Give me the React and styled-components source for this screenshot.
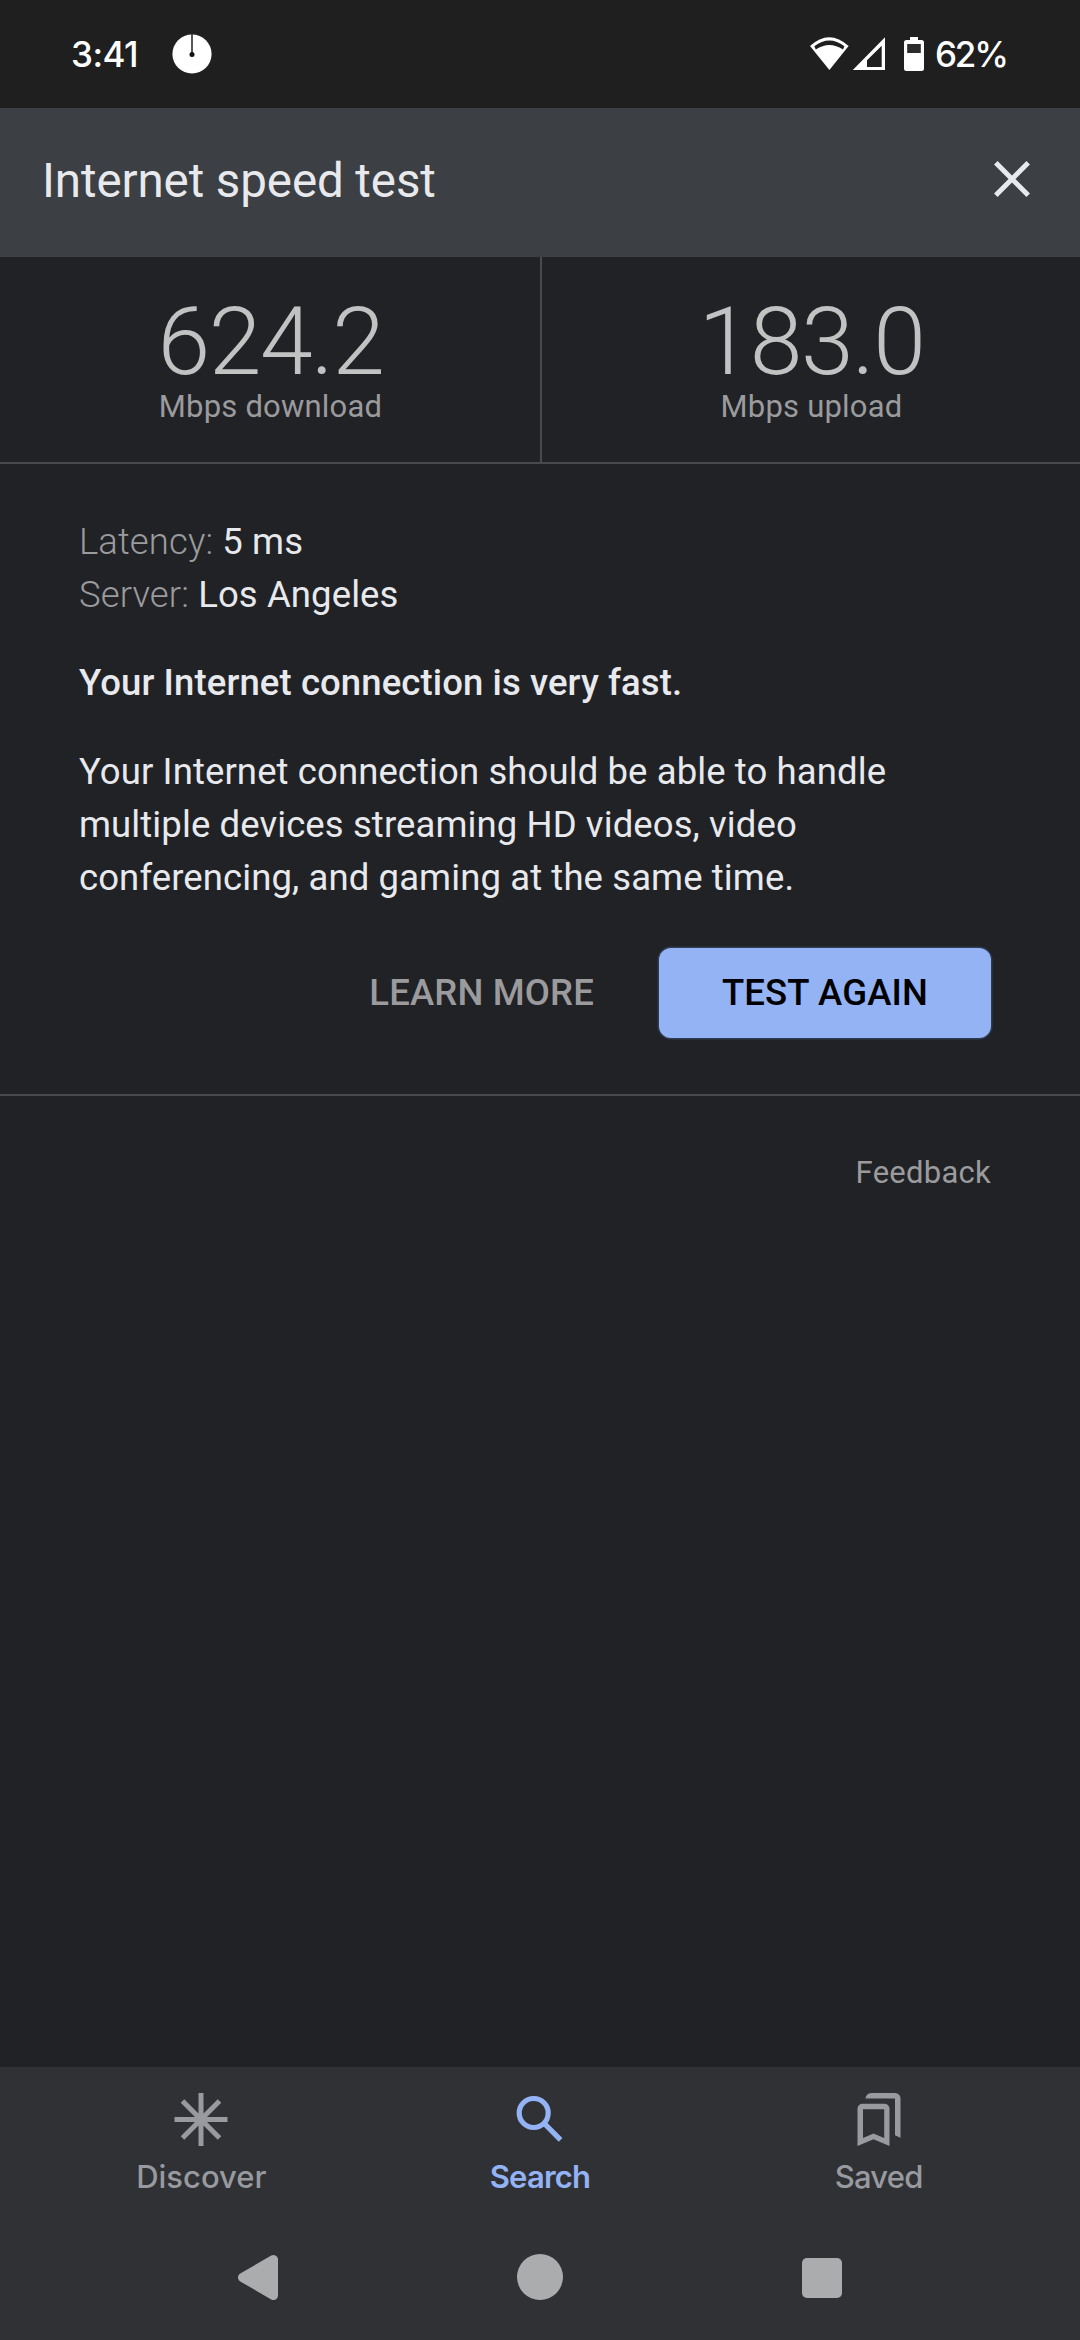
import styled, { createGlobalStyle } from "styled-components";

const COLORS = {
  statusBar: "#1f1f1f",
  header: "#3c3f43",
  page: "#212226",
  bottom: "#303135",
  divider: "#4a4a4d",
  blue: "#94b3f4",
  text: "#e8e9ed",
  muted: "#9b9b9d",
  tab: "#989a9f",
  system: "#abacae",
};

const STATS = [
  { value: "624.2", label: "Mbps download" },
  { value: "183.0", label: "Mbps upload" },
];

const TABS = [
  { label: "Discover", Icon: DiscoverIcon, spacing: "0" },
  { label: "Search", Icon: SearchIcon, active: true },
  { label: "Saved", Icon: SavedIcon },
];

function ClockIcon() {
  return (
    <svg width="40" height="40" viewBox="0 0 40 40">
      <circle cx="20" cy="20" r="19.6" fill="#fff" />
      <path d="M20 0v20" stroke="#444" strokeWidth="1.8" />
      <circle cx="20" cy="20.5" r="2.5" fill="#111" />
    </svg>
  );
}

function WifiIcon() {
  return (
    <svg width="40" height="36" viewBox="0 0 40 36">
      <path d="M1 10Q20.2 -7.4 39.6 10L20.4 34Z" fill="#fff" />
      <path
        d="M5.3 10.2Q20.4 -1 35.4 10.2L34 13.6Q20.4 4.4 6.8 13.6Z"
        fill={COLORS.statusBar}
      />
    </svg>
  );
}

function SignalIcon() {
  return (
    <svg width="34" height="36" viewBox="0 0 34 36">
      <path
        d="M0.8 34L33 1.3V34ZM15 24.3V31H29.7V9.8Z"
        fill="#fff"
        fillRule="evenodd"
      />
    </svg>
  );
}

function BatteryIcon() {
  return (
    <svg width="22" height="36" viewBox="0 0 22 36">
      <path
        d="M7 1h8v3h3.5a2.5 2.5 0 0 1 2.5 2.5v26a2.5 2.5 0 0 1-2.5 2.5h-15a2.5 2.5 0 0 1-2.5-2.5v-26a2.5 2.5 0 0 1 2.5-2.5H7z"
        fill="#fff"
      />
      <rect x="4.2" y="8" width="13.6" height="9" fill="#2c2c2c" />
    </svg>
  );
}

function CloseIcon() {
  return (
    <svg width="62" height="62" viewBox="0 0 62 62">
      <path
        d="M14.8 14.8L47.2 47.2M47.2 14.8L14.8 47.2"
        stroke={COLORS.text}
        strokeWidth="5"
      />
    </svg>
  );
}

function DiscoverIcon() {
  return (
    <svg width="64" height="64" viewBox="0 0 64 64">
      <path
        d="M32 5v53M5.5 31.5h53M13.5 13L50.5 50M50.5 13L13.5 50"
        stroke="currentColor"
        strokeWidth="5"
      />
    </svg>
  );
}

function SearchIcon() {
  return (
    <svg width="64" height="64" viewBox="0 0 64 64">
      <circle
        cx="25.7"
        cy="25"
        r="14.5"
        fill="none"
        stroke="currentColor"
        strokeWidth="5.2"
      />
      <path d="M35.8 35L52.6 51.8" stroke="currentColor" strokeWidth="5.3" />
    </svg>
  );
}

function SavedIcon() {
  return (
    <svg width="64" height="64" viewBox="0 0 64 64" fill="currentColor">
      <path
        fillRule="evenodd"
        d="M15.5 15.8h22a5 5 0 0 1 5 5V58L26.5 51.3L10.5 58V20.8a5 5 0 0 1 5-5zM16 21.2V50L26.5 45.5L37.2 50V21.2z"
      />
      <path d="M18.5 10.6a5.6 5.6 0 0 1 5.6-5.6h24a5.4 5.4 0 0 1 5.4 5.4V49.8L48 47.3V10.6z" />
    </svg>
  );
}

const App = () => {
  return (
    <Screen>
      <GlobalStyle />
      <StatusBar>
        <Time>3:41</Time>
        <ClockIcon />
        <StatusIcons>
          <WifiIcon />
          <SignalIcon />
          <BatteryIcon />
        </StatusIcons>
        <Battery>62%</Battery>
      </StatusBar>

      <Header>
        <Title>Internet speed test</Title>
        <CloseButton aria-label="Close">
          <CloseIcon />
        </CloseButton>
      </Header>

      <Stats>
        {STATS.map(({ value, label }) => (
          <Stat key={label}>
            <StatValue>{value}</StatValue>
            <StatLabel>{label}</StatLabel>
          </Stat>
        ))}
      </Stats>

      <Details>
        <div>
          <Line>
            <Name>Latency:</Name> 5 ms
          </Line>
          <Line>
            <Name>Server:</Name> Los Angeles
          </Line>
        </div>
        <Line $bold>Your Internet connection is very fast.</Line>
        <Line>
          Your Internet connection should be able to handle multiple devices
          streaming HD videos, video conferencing, and gaming at the same time.
        </Line>
        <Actions>
          <TextButton>LEARN MORE</TextButton>
          <MainButton>TEST AGAIN</MainButton>
        </Actions>
      </Details>

      <Feedback>Feedback</Feedback>

      <BottomBar>
        <Tabs>
          {TABS.map(({ label, Icon, active, spacing }) => (
            <Tab key={label} $active={active}>
              <Icon />
              <TabLabel $active={active} $spacing={spacing}>
                {label}
              </TabLabel>
            </Tab>
          ))}
        </Tabs>
        <SystemNav>
          <svg width="46" height="50" viewBox="0 0 46 50">
            <path
              d="M7.5 25.5L38.5 7.5V43.5Z"
              fill={COLORS.system}
              stroke={COLORS.system}
              strokeWidth="9"
              strokeLinejoin="round"
            />
          </svg>
          <HomeDot />
          <RecentsSquare />
        </SystemNav>
      </BottomBar>
    </Screen>
  );
};

const GlobalStyle = createGlobalStyle`
  * {
    box-sizing: border-box;
  }

  body {
    margin: 0;
    background: ${COLORS.page};
    font-family: Roboto, sans-serif;
  }

  svg {
    display: block;
    flex: none;
  }
`;

const Screen = styled.div`
  display: flex;
  flex-direction: column;
  width: 1080px;
  height: 2340px;
  overflow: hidden;
  color: ${COLORS.text};
  background: ${COLORS.page};
`;

const StatusBar = styled.div`
  display: flex;
  align-items: center;
  height: 108px;
  padding: 0 74px 0 71px;
  color: #fff;
  background: ${COLORS.statusBar};
  font-family: Inter, sans-serif;
  font-size: 35px;
  font-weight: 500;
`;

const Time = styled.span`
  width: 101px;
  letter-spacing: -0.5px;
`;

const StatusIcons = styled.div`
  display: flex;
  gap: 3px;
  margin-left: auto;

  svg:last-child {
    margin-left: 14px;
  }
`;

const Battery = styled.span`
  width: 71px;
  margin-left: 10px;
  white-space: nowrap;
  letter-spacing: -2.2px;
`;

const Header = styled.header`
  display: flex;
  align-items: center;
  justify-content: space-between;
  height: 149px;
  padding: 0 37px 8px 42px;
  background: ${COLORS.header};
`;

const Title = styled.h1`
  margin: 4px 0 0;
  font-size: 47.5px;
  font-weight: 400;
  line-height: 64px;
  letter-spacing: -0.1px;
`;

const CloseButton = styled.button`
  padding: 0;
  border: none;
  background: none;
`;

const Stats = styled.div`
  display: grid;
  grid-template-columns: 542px 1fr;
  height: 207px;
  border-bottom: 2px solid ${COLORS.divider};
`;

const Stat = styled.div`
  padding: 39px 0 0 1px;
  text-align: center;

  &:first-child {
    border-right: 2px solid ${COLORS.divider};
  }
`;

const StatValue = styled.div`
  color: #c1c2c2;
  font-size: 95px;
  font-weight: 300;
  line-height: 92px;
  letter-spacing: -1.5px;
`;

const StatLabel = styled.div`
  color: ${COLORS.muted};
  font-size: 31px;
  line-height: 38px;
  letter-spacing: 0.2px;
`;

const Details = styled.main`
  display: flex;
  flex-direction: column;
  gap: 36px;
  height: 632px;
  padding: 52px 89px 0 79px;
  border-bottom: 2px solid ${COLORS.divider};
`;

const Line = styled.p`
  margin: 0;
  font-size: 36.5px;
  font-weight: ${({ $bold }) => ($bold ? 500 : 400)};
  line-height: 52.7px;
  letter-spacing: 0.1px;
`;

const Name = styled.span`
  color: ${COLORS.muted};
  font-weight: 300;
`;

const Actions = styled.div`
  display: flex;
  justify-content: flex-end;
  gap: 65px;
  margin-top: 8px;
`;

const TextButton = styled.button`
  padding: 0 0 2px;
  border: none;
  color: ${COLORS.muted};
  background: none;
  font: 500 36.5px Roboto, sans-serif;
  letter-spacing: 0.15px;
`;

const MainButton = styled(TextButton)`
  width: 332px;
  height: 90px;
  border-radius: 12px;
  color: #000;
  background: ${COLORS.blue};
  box-shadow: 0 0 0 1.5px #2f3b52;
`;

const Feedback = styled.a`
  align-self: flex-end;
  margin: 57px 89px 0 0;
  color: ${COLORS.muted};
  font-size: 31px;
  line-height: 40px;
  letter-spacing: 0.25px;
`;

const BottomBar = styled.footer`
  margin-top: auto;
  height: 273px;
  background: ${COLORS.bottom};
`;

const Tabs = styled.nav`
  display: grid;
  grid-template-columns: repeat(3, 1fr);
  height: 146px;
  padding: 21px 32px 0;
`;

const Tab = styled.div`
  display: flex;
  flex-direction: column;
  align-items: center;
  gap: 5px;
  color: ${({ $active }) => ($active ? COLORS.blue : COLORS.tab)};
`;

const TabLabel = styled.span`
  font-family: Inter, sans-serif;
  font-size: 31px;
  font-weight: ${({ $active }) => ($active ? 600 : 500)};
  line-height: 40px;
  letter-spacing: ${({ $spacing }) => $spacing || "-0.8px"};
`;

const SystemNav = styled.div`
  display: grid;
  grid-template-columns: repeat(3, 282px);
  justify-content: center;
  align-items: center;
  justify-items: center;
  height: 127px;
`;

const HomeDot = styled.div`
  width: 46px;
  height: 46px;
  border-radius: 50%;
  background: ${COLORS.system};
`;

const RecentsSquare = styled.div`
  width: 40px;
  height: 40px;
  margin-top: 3px;
  border-radius: 5px;
  background: ${COLORS.system};
`;

export default App;
